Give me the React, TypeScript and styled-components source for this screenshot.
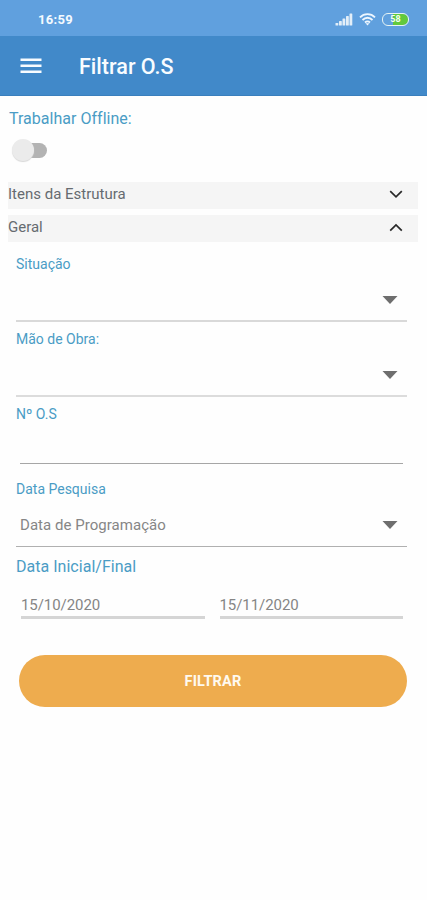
import React from "react";
import styled, { createGlobalStyle } from "styled-components";

const GlobalStyle = createGlobalStyle`
  * { box-sizing: border-box; }
  html, body { margin: 0; background: #fefefe; }
  body { font-family: Roboto, "Liberation Sans", sans-serif; }
  button, input { font-family: inherit; }
`;

const Screen = styled.div`
  width: 427px;
  height: 900px;
  background: #fefefe;
  overflow: hidden;
`;

const StatusBar = styled.div`
  height: 36px;
  padding: 3px 18px 0 38px;
  display: flex;
  align-items: center;
  justify-content: space-between;
  background: #60a0de;
  color: #f4faff;
`;

const Clock = styled.span`
  font-size: 13px;
  font-weight: 700;
  letter-spacing: 0.3px;
`;

const StatusIcons = styled.div`
  display: flex;
  align-items: center;
  gap: 6px;
  height: 14px;
  svg { display: block; }
`;

const AppBar = styled.header`
  height: 60px;
  display: flex;
  align-items: center;
  padding: 0 20px 0;
  gap: 37px;
  background: #4189c9;
  border-bottom: 1px solid #3a7fbd;
  color: #f8fcff;
`;

const MenuButton = styled.button`
  display: block;
  width: 22px;
  height: 18px;
  padding: 0;
  border: 0;
  background: none;
  color: inherit;
  svg { display: block; }
`;

const Title = styled.h1`
  margin: 0;
  padding-top: 3px;
  font-size: 21.5px;
  line-height: 26px;
  font-weight: 500;
  letter-spacing: 0.02px;
`;

const Label = styled.div<{ $large?: boolean }>`
  height: 20px;
  line-height: 20px;
  font-size: ${(p) => (p.$large ? 16 : 14)}px;
  letter-spacing: ${(p) => (p.$large ? 0.02 : 0)}px;
  color: #4a9cc5;
`;

const OfflineSection = styled.section`
  height: 86px;
  padding: 13px 9px 0;
`;

const Switch = styled.button`
  display: flex;
  align-items: center;
  width: 36px;
  height: 24px;
  margin: 9px 0 0 3px;
  padding: 0;
  border: 0;
  background: none;
`;

const Thumb = styled.span`
  width: 22px;
  height: 22px;
  border-radius: 50%;
  background: #ebebeb;
  box-shadow: 0 1px 1px #d8d8d8;
  z-index: 1;
`;

const Track = styled.span`
  width: 22px;
  height: 15px;
  margin-left: -9px;
  border-radius: 0 8px 8px 0;
  background: #b3b3b3;
`;

const Panels = styled.section`
  display: flex;
  flex-direction: column;
  gap: 6px;
  padding: 0 9px 0 8px;
`;

const PanelHeader = styled.div`
  height: 27px;
  display: flex;
  align-items: center;
  justify-content: space-between;
  padding: 0 15px 3px 0;
  background: #f5f5f5;
  color: #666b70;
  font-size: 15px;
  line-height: 20px;
`;

const Form = styled.form`
  padding: 12px 20px 0 16px;
`;

const Field = styled.div<{ $height: number }>`
  height: ${(p) => p.$height}px;
`;

const Control = styled.div<{ $line: string; $thick?: number; $height: number; $inset?: number }>`
  display: flex;
  align-items: center;
  justify-content: space-between;
  height: ${(p) => p.$height}px;
  margin: 0 ${(p) => p.$inset ?? 0}px;
  padding: 5px 9px 0 4px;
  border-bottom: ${(p) => p.$thick ?? 1}px solid ${(p) => p.$line};
  color: #868686;
  font-size: 15px;
  letter-spacing: 0.04px;
  svg { display: block; margin-left: auto; }
`;

const DateRow = styled.div`
  display: flex;
  gap: 15px;
  padding: 9px 4px 0 5px;
`;

const DateInput = styled.div`
  flex: 1;
  height: 33px;
  padding-top: 9px;
  line-height: 20px;
  font-size: 15px;
  letter-spacing: -0.06px;
  color: #858585;
  border-bottom: 3px solid #d5d5d5;
`;

const Submit = styled.button`
  display: block;
  width: 388px;
  height: 52px;
  margin: 36px 0 0 3px;
  padding: 0;
  border: 0;
  border-radius: 26px;
  background: #eeac4e;
  color: #fffaf0;
  font-size: 14.5px;
  font-weight: 700;
  letter-spacing: 0.15px;
`;

const Chevron = ({ up = false }: { up?: boolean }) => (
  <svg width="14" height="10" viewBox="0 0 14 10" fill="none" stroke="#292929" strokeWidth="1.7">
    <path d={up ? "M1.2 8.7 7 2.9l5.8 5.8" : "M1.2 2.2 7 7.8l5.8-5.6"} />
  </svg>
);

const Caret = () => (
  <svg width="16" height="8" viewBox="0 0 16 8">
    <path d="M0.5 0h15L8 8z" fill="#6e6e6e" />
  </svg>
);

const Signal = () => (
  <svg width="18" height="13" viewBox="0 0 18 13" fill="#e2eef8">
    <rect x="0.5" y="10" width="2.8" height="2.5" rx="0.6" />
    <rect x="4" y="8" width="2.8" height="4.5" rx="0.6" />
    <rect x="7.5" y="5.5" width="2.8" height="7" rx="0.6" />
    <rect x="11" y="3" width="2.8" height="9.5" rx="0.6" />
    <rect x="14.5" y="0.5" width="2.8" height="12" rx="0.6" />
  </svg>
);

const Wifi = () => (
  <svg width="17" height="13" viewBox="0 0 17 13" fill="none" stroke="#eef7ff" strokeWidth="1.8">
    <path d="M1 4.3C5.2 0 11.8 0 16 4.3M3.5 7C6.5 4 10.5 4 13.5 7M6 9.5c1.6-1.5 3.4-1.5 5 0" />
    <path d="M6.5 10.3h4l-2 2.2z" fill="#eef7ff" stroke="none" />
  </svg>
);

const BatteryShell = styled.span`
  display: flex;
  align-items: center;
  justify-content: center;
  width: 27px;
  height: 13px;
  border: 1.5px solid #e6f4f4;
  border-radius: 6px;
  background: linear-gradient(90deg, transparent 40%, #62c93d 40%);
  background-clip: padding-box;
  font-size: 9px;
  line-height: 9px;
  font-weight: 700;
  color: #f3fff0;
`;

export default function App() {
  return (
    <Screen>
      <GlobalStyle />
      <StatusBar>
        <Clock>16:59</Clock>
        <StatusIcons>
          <Signal />
          <Wifi />
          <BatteryShell>58</BatteryShell>
        </StatusIcons>
      </StatusBar>
      <AppBar>
        <MenuButton aria-label="Menu">
          <svg width="22" height="18" viewBox="0 0 22 18" fill="currentColor">
            <path d="M0.5 1.5h21v2.5h-21zM0.5 7.500h21v2.500h-21zM0.500 13.500h21v2.500h-21z" />
          </svg>
        </MenuButton>
        <Title>Filtrar O.S</Title>
      </AppBar>
      <OfflineSection>
        <Label $large>Trabalhar Offline:</Label>
        <Switch role="switch" aria-checked="false" aria-label="Trabalhar Offline">
          <Thumb />
          <Track />
        </Switch>
      </OfflineSection>
      <Panels>
        <PanelHeader>Itens da Estrutura<Chevron /></PanelHeader>
        <PanelHeader>Geral<Chevron up /></PanelHeader>
      </Panels>
      <Form>
        <Field $height={75}>
          <Label>Situação</Label>
          <Control $height={48} $line="#d9d9d9" $thick={2}><Caret /></Control>
        </Field>
        <Field $height={75}>
          <Label>Mão de Obra:</Label>
          <Control $height={48} $line="#dcdcdc" $thick={2}><Caret /></Control>
        </Field>
        <Field $height={75}>
          <Label>Nº O.S</Label>
          <Control $height={40} $inset={4} $line="#a6a6a6" />
        </Field>
        <Field $height={78}>
          <Label>Data Pesquisa</Label>
          <Control $height={48} $line="#b0b0b0">Data de Programação<Caret /></Control>
        </Field>
        <Label $large>Data Inicial/Final</Label>
        <DateRow>
          <DateInput>15/10/2020</DateInput>
          <DateInput>15/11/2020</DateInput>
        </DateRow>
        <Submit type="button">FILTRAR</Submit>
      </Form>
    </Screen>
  );
}
